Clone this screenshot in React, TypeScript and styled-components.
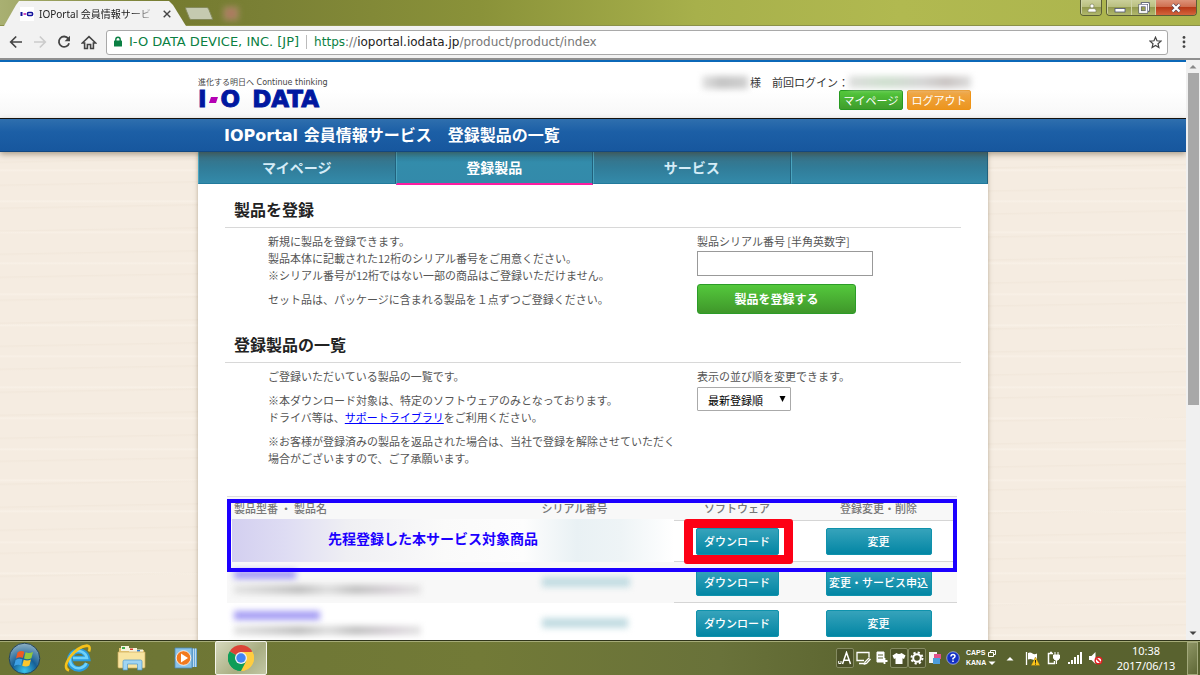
import React from "react";
import styled, { createGlobalStyle } from "styled-components";

const jp = `"Noto Sans CJK JP", sans-serif`;
const latinJp = `"Noto Sans", "Noto Sans CJK JP", sans-serif`;

const Global = createGlobalStyle`
  * { box-sizing: border-box; }
  html, body, #root { margin: 0; height: 100%; }
  body { font: 11px/17px ${jp}; color: #555; overflow: hidden; }
  button, input, select { font-family: inherit; margin: 0; }
  h1, h2, p, dl { margin: 0; }
`;

const Desktop = styled.div`
  display: flex;
  flex-direction: column;
  height: 100vh;
`;

/* ---------- browser window ---------- */

const TitleBar = styled.header`
  display: flex;
  align-items: flex-start;
  height: 26px;
  background: linear-gradient(90deg, #a9b072 0, #757b30 14%, #7a8035 22%, #8a9239 40%, #a7b04b 58%, #b1b950 75%, #abb44d 100%);
  border-bottom: 1px solid #8b9148;
`;

const TabShape = styled.div`
  display: flex;
  align-items: center;
  gap: 5px;
  width: 182px;
  height: 25px;
  margin: 1px 0 0 4px;
  padding: 0 14px 0 16px;
  background: #f2f2f2;
  clip-path: polygon(0 100%, 12px 4px, 15px 0, 165px 0, 169px 4px, 100% 100%);
`;

const TabTitle = styled.span`
  flex: 1;
  white-space: nowrap;
  font: 10px/24px ${latinJp};
  color: #222;
  mask-image: linear-gradient(90deg, #000 80%, transparent 100%);
`;

const PlainButton = styled.button<{ $w?: number }>`
  display: flex;
  align-items: center;
  justify-content: center;
  flex: none;
  width: ${(p) => p.$w ?? 16}px;
  height: 16px;
  padding: 0;
  border: 0;
  background: none;
  color: #444;
`;

const NewTab = styled.button`
  width: 24px;
  height: 13px;
  margin: 7px 0 0 1px;
  padding: 0;
  border: 1px solid #858a5c;
  border-radius: 2px;
  background: #c5cab0;
  transform: skewX(22deg);
`;

const HiddenTabIcon = styled.span`
  width: 14px;
  height: 13px;
  margin: 7px 0 0 13px;
  background: radial-gradient(#a8614a, #b5a684);
  filter: blur(3px);
`;

const WindowButtons = styled.div`
  display: flex;
  margin-left: auto;
  padding-right: 3px;
  gap: 4px;
`;

const ButtonSet = styled.div`
  display: flex;
  height: 16px;
  border: 1px solid #5b5f37;
  border-top: 0;
  border-radius: 0 0 4px 4px;
  overflow: hidden;
`;

const WindowButton = styled.button<{ $w: number; $close?: boolean }>`
  display: flex;
  align-items: center;
  justify-content: center;
  width: ${(p) => p.$w}px;
  height: 15px;
  padding: 0;
  border: 0;
  border-left: 1px solid #ced3a5;
  background: ${(p) =>
    p.$close
      ? "linear-gradient(#dd9379 0, #cf6f50 45%, #b83a18 50%, #d4643c 100%)"
      : "linear-gradient(#cbd09a 0, #b9bf80 45%, #949b50 50%, #b1b86c 100%)"};
`;

const Toolbar = styled.nav`
  display: flex;
  align-items: center;
  gap: 8px;
  height: 34px;
  padding: 0 8px;
  background: #f2f2f2;
  border-bottom: 2px solid #8f8f8f;
`;

const AddressBar = styled.div`
  display: flex;
  align-items: center;
  flex: 1;
  height: 25px;
  padding: 0 4px 0 6px;
  border: 1px solid #a9a9a9;
  border-radius: 3px;
  background: #fff;
  font: 12px/22px "DejaVu Sans", ${jp};
  color: #777;
`;

const Issuer = styled.span`
  margin: 0 7px 0 6px;
  padding-right: 7px;
  border-right: 1px solid #bbb;
  font-size: 13px;
  line-height: 14px;
  color: #0b8043;
  white-space: nowrap;
`;

const Address = styled.div`
  flex: 1;
  white-space: nowrap;
  b { font-weight: 400; color: #222; }
  i { font-style: normal; color: #0b8043; }
`;

const Viewport = styled.div`
  display: flex;
  flex: 1;
  min-height: 0;
  overflow: hidden;
`;

const ScrollBar = styled.div`
  display: flex;
  flex-direction: column;
  align-items: center;
  gap: 4px;
  width: 14px;
  padding: 4px 0;
  background: #f0f0f0;
`;

const Thumb = styled.div`
  width: 11px;
  height: 58%;
  background: #a8a8a8;
`;

/* ---------- web page ---------- */

const Page = styled.div`
  flex: 1;
  min-width: 0;
  overflow: hidden;
  background:
    repeating-linear-gradient(179deg, transparent 0 9px, rgba(226, 212, 194, 0.16) 10px, transparent 12px 23px),
    repeating-linear-gradient(180deg, transparent 0 16px, rgba(255, 250, 243, 0.35) 17px, transparent 19px 31px),
    #f5ece1;
`;

const SiteHeader = styled.header`
  height: 59px;
  border-top: 2px solid #0b68b8;
  border-bottom: 1px solid #111;
  background: linear-gradient(#fff 50%, #f7f7f7);
`;

const Container = styled.div`
  width: 790px;
  max-width: 100%;
  margin: 0 auto;
`;

const HeaderRow = styled(Container)`
  display: flex;
  justify-content: space-between;
  padding: 12px 17px 0 0;
`;

const Tagline = styled.p`
  padding-top: 1px;
  font: 8px/16px "DejaVu Sans", ${jp};
  color: #444;
  white-space: nowrap;
`;

const Logo = styled.div`
  display: flex;
  align-items: center;
  font: bold 23px/17px "DejaVu Sans", sans-serif;
  color: #0018a0;
  -webkit-text-stroke: 1px #0018a0;
  svg { margin: 0 3px 0 2px; }
  span + span { margin-left: 12px; }
`;

const Account = styled.div`
  display: flex;
  flex-direction: column;
  align-items: flex-end;
`;

const AccountLine = styled.p`
  display: flex;
  align-items: center;
  height: 16px;
  color: #333;
  white-space: pre;
`;

const Smudge = styled.span<{ $w: number; $h?: number; $bg: string }>`
  display: block;
  width: ${(p) => p.$w}px;
  height: ${(p) => p.$h ?? 10}px;
  background: ${(p) => p.$bg};
  filter: blur(3px);
`;

const AccountButtons = styled.div`
  display: flex;
  gap: 4px;
`;

const PillButton = styled.button<{ $orange?: boolean }>`
  width: 64px;
  height: 20px;
  padding: 0;
  border: 1px solid ${(p) => (p.$orange ? "#ee9316" : "#279a20")};
  border-radius: 2px;
  background: ${(p) =>
    p.$orange ? "linear-gradient(#f0a848, #ec951e)" : "linear-gradient(#52c83a, #3f9c2c)"};
  font-size: 11px;
  line-height: 17px;
  color: #fff;
  white-space: nowrap;
`;

const TitleBand = styled.div`
  position: relative;
  height: 33px;
  background: linear-gradient(#2f6fae 0, #1c5fa6 40%, #17579e 100%);
  border-bottom: 1px solid #124780;
  box-shadow: 0 2px 6px rgba(70, 50, 20, 0.45);
`;

const PageTitle = styled.h1`
  display: flex;
  gap: 16px;
  padding: 1px 0 0 26px;
  font: bold 16px/32px "DejaVu Sans", ${jp};
  color: #fff;
  white-space: nowrap;
`;

const Sheet = styled(Container)`
  min-height: 100%;
  background: #fff;
  box-shadow: 0 0 4px rgba(120, 100, 70, 0.5);
`;

const Tabs = styled.nav`
  display: flex;
  height: 32px;
`;

const TabLink = styled.a<{ $active?: boolean }>`
  flex: 1;
  height: ${(p) => (p.$active ? 33 : 32)}px;
  border-left: 1px solid #4aa5c0;
  border-right: 1px solid #22617c;
  border-bottom: ${(p) => (p.$active ? "2px solid #ff1ca0" : "1px solid #227a9c")};
  background: ${(p) =>
    p.$active
      ? "linear-gradient(#2f7f9b, #338cab 35%, #338aaa)"
      : "linear-gradient(#3a6e82, #317c98 50%, #338aaa)"};
  font-size: 14px;
  font-weight: bold;
  line-height: 31px;
  text-align: center;
  text-decoration: none;
  color: ${(p) => (p.$active ? "#fff" : "#d5ecf7")};
`;

const Main = styled.main`
  padding: 13px 27px 0;
`;

const SectionTitle = styled.h2`
  padding: 0 9px 6px;
  border-bottom: 1px solid #d8d8d8;
  font-size: 16px;
  line-height: 24px;
  color: #222;
`;

const Columns = styled.div<{ $after: number }>`
  display: grid;
  grid-template-columns: 1fr 264px;
  padding-top: 5px;
  margin-bottom: ${(p) => p.$after}px;
`;

const Copy = styled.div`
  display: flex;
  flex-direction: column;
  gap: 7px;
  padding-left: 43px;
  white-space: nowrap;
  a { color: #00f; }
`;

const Field = styled.form`
  display: flex;
  flex-direction: column;
  align-items: flex-start;
  gap: 1px;
`;

const TextInput = styled.input`
  width: 176px;
  height: 25px;
  border: 1px solid #999;
  background: #fff;
`;

const RegisterButton = styled.button`
  width: 159px;
  height: 30px;
  margin-top: 7px;
  padding: 0;
  border: 1px solid #2c9c28;
  border-radius: 3px;
  background: linear-gradient(#54c83c, #3f972a);
  font-size: 12px;
  font-weight: bold;
  line-height: 28px;
  color: #fff;
`;

const SelectBox = styled.span`
  position: relative;
  margin-top: 1px;
  svg { position: absolute; right: 5px; top: 9px; pointer-events: none; }
`;

const Select = styled.select`
  appearance: none;
  width: 94px;
  height: 24px;
  padding: 2px 10px 0;
  border: 1px solid #aaa;
  border-radius: 1px;
  background: #fff;
  font-size: 11px;
  color: #000;
`;

const TableArea = styled.div`
  position: relative;
  width: 730px;
  margin-left: 2px;
`;

const Table = styled.table`
  width: 100%;
  table-layout: fixed;
  border-collapse: collapse;
  border-top: 1px solid #ddd;
`;

const Th = styled.th<{ $left?: boolean }>`
  height: 24px;
  padding: 0 7px;
  background: #f8f8f8;
  font-weight: 500;
  color: #777;
  text-align: ${(p) => (p.$left ? "left" : "center")};
`;

const Row = styled.tr<{ $shade?: boolean }>`
  height: 41px;
  background: ${(p) => (p.$shade ? "#f8f8f8" : "#fff")};
`;

const Td = styled.td<{ $line?: boolean }>`
  padding: 0 7px;
  border-top: ${(p) => (p.$line ? "1px solid #d5d5d5" : "0")};
  text-align: center;
`;

const SmudgeStack = styled.div<{ $indent?: number }>`
  display: flex;
  flex-direction: column;
  gap: 6px;
  padding-left: ${(p) => p.$indent ?? 0}px;
`;

const ActionButton = styled.button<{ $wide?: boolean }>`
  display: block;
  width: ${(p) => (p.$wide ? 106 : 83)}px;
  height: 27px;
  margin: 0 auto;
  padding: 0;
  border: 1px solid #0f92ac;
  border-radius: 2px;
  background: linear-gradient(#36a3bb, #0386a4);
  font-size: 11px;
  font-weight: 500;
  line-height: 24px;
  color: #fff;
  white-space: nowrap;
`;

/* annotation marks drawn over the table */
const BlueFrame = styled.div`
  position: absolute;
  inset: 3px 0 auto 0;
  height: 73px;
  border: 4px solid #1c00ff;
  pointer-events: none;
`;

const RedFrame = styled.div`
  position: absolute;
  top: 23px;
  right: 164px;
  width: 109px;
  height: 45px;
  border: 9px solid #fd0015;
  border-radius: 3px;
  pointer-events: none;
`;

const Note = styled.p`
  position: absolute;
  top: 23px;
  left: 5px;
  width: 442px;
  height: 43px;
  padding-left: 96px;
  background: linear-gradient(90deg, #d3cff0 0, #dedcf3 12%, #efeff3 26%, #fafafa 48%, #fdfdfd 66%, #e9f1f4 78%, #eef4f6 88%, #fff 100%);
  font-size: 14px;
  font-weight: bold;
  line-height: 38px;
  color: #1c00ff;
`;

/* ---------- taskbar ---------- */

const Taskbar = styled.footer`
  display: flex;
  align-items: center;
  height: 35px;
  padding: 0 2px 0 7px;
  border-top: 1px solid #30351a;
  box-shadow: inset 0 1px #a5ab78;
  background: linear-gradient(90deg, #6c7434, #727a37 40%, #69723a 60%, #59622e 75%, #59622f);
  color: #fff;
`;

const Launch = styled.button<{ $active?: boolean }>`
  display: flex;
  align-items: center;
  justify-content: center;
  width: ${(p) => (p.$active ? 52 : 54)}px;
  height: 34px;
  margin-left: ${(p) => (p.$active ? 2 : 0)}px;
  padding: 0;
  border: ${(p) => (p.$active ? "1px solid #f4f4ea" : "0")};
  border-radius: 2px;
  background: ${(p) => (p.$active ? "linear-gradient(135deg, #d5d8bd, #a9ae82 60%, #c3c7a5)" : "none")};
`;

const StartButton = styled(Launch)`
  width: 34px;
  margin-right: 10px;
`;

const Tray = styled.div`
  display: flex;
  align-items: center;
  margin-left: auto;
`;

const TrayIcon = styled.button<{ $w?: number; $boxed?: boolean }>`
  display: flex;
  align-items: center;
  justify-content: center;
  width: ${(p) => p.$w ?? 18}px;
  height: 20px;
  padding: 0;
  border: ${(p) => (p.$boxed ? "1px solid #858b62" : "0")};
  border-radius: 2px;
  background: ${(p) => (p.$boxed ? "#4c5228" : "none")};
  color: #fff;
`;

const LockState = styled.div`
  display: grid;
  grid-template-columns: 22px 10px;
  align-items: center;
  width: 32px;
  margin-left: 4px;
  font: bold 7px/10px "Liberation Sans", sans-serif;
`;

const Clock = styled.time`
  width: 76px;
  margin-left: 2px;
  font: 11px/15px ${latinJp};
  text-align: center;
`;

const ShowDesktop = styled.button`
  width: 11px;
  height: 33px;
  margin-left: 3px;
  padding: 0;
  border: 1px solid #a3a97c;
  background: linear-gradient(135deg, #8d9464, #5f6836);
`;

const greenSmudge = "linear-gradient(90deg, #ddd, #cfe0cf 30%, #d6d6d6 60%, #c9c4c2 80%, #ddd)";
const textSmudge = "linear-gradient(90deg, #e2e2e2, #cfcfcf 20%, #bdbdbd 35%, #dcdcdc 50%, #bfbfbf 65%, #d6d0d6 85%, #e4e4e4)";

const rows = [
  { change: "変更", blue: 0, teal: 0 },
  { change: "変更・サービス申込", blue: 62, teal: 88 },
  { change: "変更", blue: 86, teal: 86 },
];

const Arrow = ({ up, color = "#555" }: { up?: boolean; color?: string }) => (
  <svg width="8" height="5" viewBox="0 0 8 5">
    <path d={up ? "M.5 4.5L4 1L7.5 4.5Z" : "M.5 .5H7.5L4 4Z"} fill={color} />
  </svg>
);

function BrowserChrome() {
  return (
    <>
      <TitleBar>
        <TabShape>
          <svg width="14" height="14" viewBox="0 0 14 14">
            <path fill="#fff" d="M0 0H14V14H0Z" />
            <path d="M1.5 5V9" stroke="#12129c" strokeWidth="2" />
            <path d="M3.5 7H6" stroke="#c010a0" strokeWidth="1.6" />
            <rect x="7.5" y="5.5" width="5" height="3" rx="1" fill="none" stroke="#12129c" strokeWidth="1.6" />
          </svg>
          <TabTitle>IOPortal 会員情報サービ</TabTitle>
          <PlainButton aria-label="タブを閉じる" $w={10}>
            <svg width="8" height="8" viewBox="0 0 8 8">
              <path d="M.7.7L7.3 7.3M7.3.7L.7 7.3" stroke="#444" strokeWidth="1.4" />
            </svg>
          </PlainButton>
        </TabShape>
        <NewTab aria-label="新しいタブ" />
        <HiddenTabIcon />
        <WindowButtons>
          <ButtonSet>
            <WindowButton $w={20} aria-label="ユーザー">
              <svg width="10" height="10" viewBox="0 0 10 10" fill="#fff" stroke="#70744d" strokeWidth=".6">
                <circle cx="5" cy="3" r="2" />
                <path d="M1 9V7.2Q1 5.6 3 5.6H7Q9 5.6 9 7.2V9Z" />
              </svg>
            </WindowButton>
          </ButtonSet>
          <ButtonSet>
            <WindowButton $w={24} aria-label="最小化">
              <svg width="12" height="12" viewBox="0 0 12 12">
                <rect x="1" y="6.5" width="10" height="3.5" fill="#fff" stroke="#4c5370" strokeWidth=".8" />
              </svg>
            </WindowButton>
            <WindowButton $w={24} aria-label="元に戻す">
              <svg width="12" height="12" viewBox="0 0 12 12" fill="none">
                <path d="M4 3V1.5H10.5V8.5H9" stroke="#4c5370" strokeWidth="2.4" />
                <path d="M4 3V1.5H10.5V8.5H9" stroke="#fff" />
                <rect x="2" y="3.5" width="6.5" height="6.5" stroke="#4c5370" strokeWidth="3" />
                <rect x="2" y="3.5" width="6.5" height="6.5" stroke="#fff" strokeWidth="1.8" />
              </svg>
            </WindowButton>
            <WindowButton $w={41} $close aria-label="閉じる">
              <svg width="12" height="10" viewBox="0 0 12 10">
                <path d="M2.5 1.5L9.5 8.5M9.5 1.5L2.5 8.5" stroke="#5b4452" strokeWidth="3.6" />
                <path d="M2.5 1.5L9.5 8.5M9.5 1.5L2.5 8.5" stroke="#fff" strokeWidth="2.2" />
              </svg>
            </WindowButton>
          </ButtonSet>
        </WindowButtons>
      </TitleBar>
      <Toolbar>
        <PlainButton aria-label="戻る">
          <svg width="14" height="14" viewBox="0 0 14 14" fill="none" stroke="#444" strokeWidth="1.7">
            <path d="M13 7H2M7.2 1.5L1.7 7L7.2 12.5" />
          </svg>
        </PlainButton>
        <PlainButton aria-label="進む">
          <svg width="14" height="14" viewBox="0 0 14 14" fill="none" stroke="#ccc" strokeWidth="1.7">
            <path d="M1 7H12M6.8 1.5L12.3 7L6.8 12.5" />
          </svg>
        </PlainButton>
        <PlainButton aria-label="再読み込み">
          <svg width="14" height="14" viewBox="0 0 14 14">
            <path d="M11.3 3.6A5.2 5.2 0 1 0 12.1 8.2" fill="none" stroke="#444" strokeWidth="1.8" />
            <path d="M13 .8V6.2H7.6Z" fill="#444" />
          </svg>
        </PlainButton>
        <PlainButton aria-label="ホーム" $w={18}>
          <svg width="16" height="15" viewBox="0 0 16 15" fill="none" stroke="#444" strokeWidth="1.6">
            <path d="M1.3 8L8 1.6L14.7 8H12.4V13.5H9.6V9.5H6.4V13.5H3.6V8Z" />
          </svg>
        </PlainButton>
        <AddressBar>
          <svg width="10" height="12" viewBox="0 0 10 12">
            <path d="M2.8 5V3.4A2.2 2.2 0 0 1 7.2 3.4V5" fill="none" stroke="#0b8043" strokeWidth="1.4" />
            <rect x="1" y="4.6" width="8" height="6" rx=".6" fill="#0b8043" />
          </svg>
          <Issuer>I-O DATA DEVICE, INC. [JP]</Issuer>
          <Address>
            <i>https</i>://<b>ioportal.iodata.jp</b>/product/product/index
          </Address>
          <PlainButton aria-label="ブックマーク">
            <svg width="13" height="13" viewBox="0 0 13 13">
              <path d="M6.5 1.2L8 4.8L12 5.1L9 7.7L9.9 11.6L6.5 9.5L3.1 11.6L4 7.7L1 5.1L5 4.8Z" fill="none" stroke="#444" strokeWidth="1.2" />
            </svg>
          </PlainButton>
        </AddressBar>
        <PlainButton aria-label="メニュー">
          <svg width="4" height="14" viewBox="0 0 4 14" fill="#444">
            <circle cx="2" cy="2.4" r="1.4" />
            <circle cx="2" cy="7" r="1.4" />
            <circle cx="2" cy="11.6" r="1.4" />
          </svg>
        </PlainButton>
      </Toolbar>
    </>
  );
}

function ProductTable() {
  return (
    <TableArea>
      <Table>
        <colgroup>
          <col />
          <col width="199" />
          <col width="126" />
          <col width="157" />
        </colgroup>
        <thead>
          <tr>
            <Th $left>製品型番 ・ 製品名</Th>
            <Th>シリアル番号</Th>
            <Th>ソフトウェア</Th>
            <Th>登録変更・削除</Th>
          </tr>
        </thead>
        <tbody>
          {rows.map((r, i) => (
            <Row key={i} $shade={i === 1}>
              <Td>
                {r.blue > 0 && (
                  <SmudgeStack>
                    <Smudge $w={r.blue} $h={9} $bg="#a49cf4" />
                    <Smudge $w={187} $h={9} $bg={textSmudge} />
                  </SmudgeStack>
                )}
              </Td>
              <Td>
                {r.teal > 0 && (
                  <SmudgeStack $indent={60}>
                    <Smudge $w={r.teal} $h={10} $bg="#c2dce2" />
                  </SmudgeStack>
                )}
              </Td>
              <Td $line>
                <ActionButton>ダウンロード</ActionButton>
              </Td>
              <Td $line>
                <ActionButton $wide>{r.change}</ActionButton>
              </Td>
            </Row>
          ))}
        </tbody>
      </Table>
      <Note>先程登録した本サービス対象商品</Note>
      <BlueFrame />
      <RedFrame />
    </TableArea>
  );
}

function PortalPage() {
  return (
    <Page>
      <SiteHeader>
        <HeaderRow>
          <div>
            <Tagline>進化する明日へ Continue thinking</Tagline>
            <Logo aria-label="I-O DATA">
              I
              <svg width="9" height="6" viewBox="0 0 9 6">
                <path d="M2 0H9L7 6H0Z" fill="#b400b4" />
              </svg>
              <span>O</span>
              <span>DATA</span>
            </Logo>
          </div>
          <Account>
            <AccountLine>
              <Smudge $w={46} $h={13} $bg="linear-gradient(90deg, #e2e2e2, #c4c4c4 40%, #cfcfcf)" />
              {" 様　前回ログイン："}
              <Smudge $w={122} $h={12} $bg={greenSmudge} />
            </AccountLine>
            <AccountButtons>
              <PillButton>マイページ</PillButton>
              <PillButton $orange>ログアウト</PillButton>
            </AccountButtons>
          </Account>
        </HeaderRow>
      </SiteHeader>
      <TitleBand>
        <Container>
          <PageTitle>
            <span>IOPortal 会員情報サービス</span>
            <span>登録製品の一覧</span>
          </PageTitle>
        </Container>
      </TitleBand>
      <Sheet>
        <Tabs>
          <TabLink href="#mypage">マイページ</TabLink>
          <TabLink href="#products" $active>登録製品</TabLink>
          <TabLink href="#service">サービス</TabLink>
          <TabLink as="span" />
        </Tabs>
        <Main>
          <SectionTitle>製品を登録</SectionTitle>
          <Columns $after={18}>
            <Copy>
              <p>
                新規に製品を登録できます。<br />
                製品本体に記載された12桁のシリアル番号をご用意ください。<br />
                ※シリアル番号が12桁ではない一部の商品はご登録いただけません。
              </p>
              <p>セット品は、パッケージに含まれる製品を１点ずつご登録ください。</p>
            </Copy>
            <Field>
              <label htmlFor="serial">製品シリアル番号 [半角英数字]</label>
              <TextInput id="serial" type="text" />
              <RegisterButton type="button">製品を登録する</RegisterButton>
            </Field>
          </Columns>
          <SectionTitle>登録製品の一覧</SectionTitle>
          <Columns $after={29}>
            <Copy>
              <p>ご登録いただいている製品の一覧です。</p>
              <p>
                ※本ダウンロード対象は、特定のソフトウェアのみとなっております。<br />
                ドライバ等は、<a href="#library">サポートライブラリ</a>をご利用ください。
              </p>
              <p>
                ※お客様が登録済みの製品を返品された場合は、当社で登録を解除させていただく<br />
                場合がございますので、ご了承願います。
              </p>
            </Copy>
            <Field>
              <label htmlFor="order">表示の並び順を変更できます。</label>
              <SelectBox>
                <Select id="order" defaultValue="new">
                  <option value="new">最新登録順</option>
                </Select>
                <svg width="7" height="6" viewBox="0 0 7 6">
                  <path d="M.5 0H6.5L3.5 6Z" fill="#000" />
                </svg>
              </SelectBox>
            </Field>
          </Columns>
          <ProductTable />
        </Main>
      </Sheet>
    </Page>
  );
}

function TaskbarRow() {
  return (
    <Taskbar>
      <StartButton aria-label="スタート">
        <svg width="33" height="33" viewBox="0 0 33 33">
          <defs>
            <radialGradient id="orb" cx=".5" cy=".9" r=".9">
              <stop offset="0" stopColor="#38c4ee" />
              <stop offset=".45" stopColor="#155f96" />
              <stop offset="1" stopColor="#8fb1c4" />
            </radialGradient>
          </defs>
          <circle cx="16.5" cy="16.5" r="15.3" fill="url(#orb)" stroke="#24455c" />
          <path d="M9.5 10.5Q13 8 16.3 9.8L14.8 16Q11.5 14.5 8 16.5Z" fill="#ee5a24" />
          <path d="M17.6 10.3Q21 12 25 10L23.4 16.2Q19.5 18 16 16.4Z" fill="#93c83d" />
          <path d="M7.6 17.9Q11 15.9 14.4 17.3L12.9 23.2Q9.6 22 6 24Z" fill="#3ea0e4" />
          <path d="M15.7 17.8Q19.3 19.4 23 17.5L21.4 23.6Q17.8 25.4 14.2 23.7Z" fill="#fdc62d" />
        </svg>
      </StartButton>
      <Launch aria-label="Internet Explorer">
        <svg width="28" height="28" viewBox="0 0 28 28" fill="none">
          <path d="M23 19.5A9 9 0 1 1 23.6 14.5H9" stroke="#2a9bdc" strokeWidth="5.4" />
          <path d="M22.5 19A8.6 8.6 0 1 1 23 14H9" stroke="#6fd2fa" strokeWidth="2.6" />
          <path d="M5 26.5Q-1.5 24 6 13Q14 2.5 23 1.6Q27 1.8 25 7.5" stroke="#f5c21a" strokeWidth="2.6" />
        </svg>
      </Launch>
      <Launch aria-label="エクスプローラー">
        <svg width="30" height="28" viewBox="0 0 30 28">
          <path d="M2 4H9L11 6H27V22H2Z" fill="#e6c674" />
          <path d="M4 2H12V7H4Z" fill="#f7f3dd" /><path d="M5 3H8V5H5Z" fill="#3fae49" />
          <path d="M12 4H20V8H12Z" fill="#f7f3dd" /><path d="M13 4.5H16V6H13Z" fill="#d9402f" />
          <path d="M19 5.5H26V9H19Z" fill="#f7f3dd" /><path d="M20 6H23V7.5H20Z" fill="#2f7fd0" />
          <path d="M1 8H28V23Q28 24 27 24H2Q1 24 1 23Z" fill="#f8e4a0" stroke="#cfae5c" strokeWidth=".7" />
          <path d="M6 26V17.5Q6 16 7.5 16H23.5Q25 16 25 17.5V26H20.5V20H10.5V26Z" fill="#9fd4f2" stroke="#4f97c8" strokeWidth=".7" />
        </svg>
      </Launch>
      <Launch aria-label="メディアプレーヤー">
        <svg width="24" height="24" viewBox="0 0 24 24">
          <path d="M17 2.5H23V21H17Z" fill="#6aa8d8" />
          <path d="M19.5 2.5V21M21.5 2.5V21" stroke="#d6ebf8" strokeWidth=".8" />
          <path d="M1 2H18V22H1Z" fill="#8cc3e8" stroke="#4d89b8" strokeWidth=".8" />
          <circle cx="9.5" cy="12" r="7.3" fill="#f27a1e" stroke="#fff" strokeWidth=".8" />
          <path d="M7 7.6L14 12L7 16.4Z" fill="#fff" />
        </svg>
      </Launch>
      <Launch $active aria-label="Google Chrome">
        <svg width="26" height="26" viewBox="0 0 26 26">
          <path d="M13 13L1.74 6.5A13 13 0 0 1 24.26 6.5Z" fill="#db4437" />
          <path d="M13 13L24.26 6.5A13 13 0 0 1 13 26Z" fill="#ffcd40" />
          <path d="M13 13L13 26A13 13 0 0 1 1.74 6.5Z" fill="#0f9d58" />
          <path d="M13 7H24.5A13 13 0 0 1 13 26L18.2 16Z" fill="#ffcd40" />
          <path d="M1.74 6.5L7.8 16L13 19L18.2 16L13 26A13 13 0 0 1 1.74 6.5Z" fill="#0f9d58" />
          <circle cx="13" cy="13" r="6" fill="#f1f1f1" />
          <circle cx="13" cy="13" r="4.7" fill="#4285f4" />
        </svg>
      </Launch>
      <Tray>
        <TrayIcon $boxed aria-label="入力モード">
          <svg width="14" height="14" viewBox="0 0 14 14" fill="none" stroke="#fff">
            <path d="M4.5 13L8.5 1.5L12.5 13M6 9.2H11" strokeWidth="1.5" />
            <path d="M.7 10V12.5H3V10" />
          </svg>
        </TrayIcon>
        <TrayIcon aria-label="手書き">
          <svg width="15" height="14" viewBox="0 0 15 14" fill="none" stroke="#fff" strokeWidth="1.3">
            <path d="M8 9.5H1V1.5H13V6M3 12.5H8" />
            <path d="M13.5 6.5L9 11L8.5 13L10.5 12.5L14.5 8" />
          </svg>
        </TrayIcon>
        <TrayIcon aria-label="単語登録">
          <svg width="13" height="14" viewBox="0 0 13 14" fill="none" stroke="#fff">
            <path d="M2 1H9V11H2Z" fill="#fff" />
            <path d="M3 4H8M3 7H8" stroke="#59622e" />
            <path d="M9.5 7V13M6.5 10H12.5" strokeWidth="1.8" />
          </svg>
        </TrayIcon>
        <TrayIcon $boxed aria-label="着せ替え">
          <svg width="14" height="13" viewBox="0 0 14 13">
            <path d="M4.5 1Q7 3 9.5 1L13.5 3.5L12 7L10.5 6.3V12H3.5V6.3L2 7L.5 3.5Z" fill="#fff" />
          </svg>
        </TrayIcon>
        <TrayIcon $boxed aria-label="設定">
          <svg width="14" height="14" viewBox="0 0 14 14" fill="none" stroke="#fff">
            <circle cx="7" cy="7" r="5.5" strokeWidth="2" strokeDasharray="2.2 2.12" />
            <circle cx="7" cy="7" r="3.8" strokeWidth="2" />
          </svg>
        </TrayIcon>
        <TrayIcon aria-label="パッド">
          <svg width="14" height="14" viewBox="0 0 14 14">
            <path d="M1 1H9V12H1Z" fill="#f4f4f4" />
            <path d="M6 3H13V8H6Z" fill="#e2518c" />
            <path d="M5 7H12V13H5Z" fill="#4c9ddc" />
          </svg>
        </TrayIcon>
        <TrayIcon aria-label="ヘルプ">
          <svg width="14" height="14" viewBox="0 0 14 14">
            <circle cx="7" cy="7" r="6.3" fill="#1430c4" stroke="#b8c4f0" strokeWidth=".7" />
            <path d="M5 5.5Q5 3.5 7 3.5Q9 3.5 9 5.3Q9 6.4 7 7.4V8.5M7 9.6V11" fill="none" stroke="#fff" strokeWidth="1.5" />
          </svg>
        </TrayIcon>
        <LockState>
          <span>CAPS</span>
          <svg width="8" height="7" viewBox="0 0 8 7" fill="none" stroke="#fff">
            <path d="M2.5 2V.5H7.5V4.5H5.5M.5 2.5H5.5V6.5H.5Z" />
          </svg>
          <span>KANA</span>
          <Arrow color="#fff" />
        </LockState>
        <TrayIcon $w={24} aria-label="隠れているインジケーター">
          <Arrow up color="#fff" />
        </TrayIcon>
        <TrayIcon $w={21} aria-label="アクションセンター">
          <svg width="15" height="15" viewBox="0 0 15 15">
            <path d="M1.5 1V14" stroke="#fff" strokeWidth="1.3" />
            <path d="M3 2Q5.5 1 7.5 2.5T12 2.5V8.5Q9.5 9.5 7.5 8.5T3 8.5Z" fill="#fff" />
            <path d="M10.5 6L15 14.5H6Z" fill="#fcc419" stroke="#7a6410" strokeWidth=".4" />
            <path d="M10.5 9V11.8M10.5 12.6V13.6" stroke="#222" />
          </svg>
        </TrayIcon>
        <TrayIcon $w={21} aria-label="電源">
          <svg width="14" height="14" viewBox="0 0 14 14" fill="none" stroke="#fff">
            <path d="M6 2.5H1.5V12.5H7.5V10M3 1.5H5" strokeWidth="1.5" />
            <path d="M6.5 4H12.5V7L11 9H8L6.5 7Z" fill="#fff" />
            <path d="M8 4V1M11 4V1M9.5 9V13" />
          </svg>
        </TrayIcon>
        <TrayIcon $w={21} aria-label="ネットワーク">
          <svg width="14" height="12" viewBox="0 0 14 12" fill="#fff">
            <path d="M0 10H2V12H0ZM3 8H5V12H3ZM6 5H8V12H6ZM9 3H11V12H9ZM12 0H14V12H12Z" />
          </svg>
        </TrayIcon>
        <TrayIcon $w={21} aria-label="音量">
          <svg width="15" height="14" viewBox="0 0 15 14">
            <path d="M1 5H3.5L7.5 1V13L3.5 9H1Z" fill="#fff" />
            <circle cx="10.5" cy="9.5" r="4" fill="#e02020" />
            <circle cx="10.5" cy="9.5" r="2.6" fill="#fff" />
            <path d="M8.6 7.6L12.4 11.4" stroke="#e02020" strokeWidth="1.5" />
          </svg>
        </TrayIcon>
        <Clock>
          10:38<br />2017/06/13
        </Clock>
        <ShowDesktop aria-label="デスクトップの表示" />
      </Tray>
    </Taskbar>
  );
}

export default function App() {
  return (
    <Desktop>
      <Global />
      <BrowserChrome />
      <Viewport>
        <PortalPage />
        <ScrollBar>
          <Arrow up color="#888" />
          <Thumb />
          <div style={{ flex: 1 }} />
          <Arrow color="#444" />
        </ScrollBar>
      </Viewport>
      <TaskbarRow />
    </Desktop>
  );
}
